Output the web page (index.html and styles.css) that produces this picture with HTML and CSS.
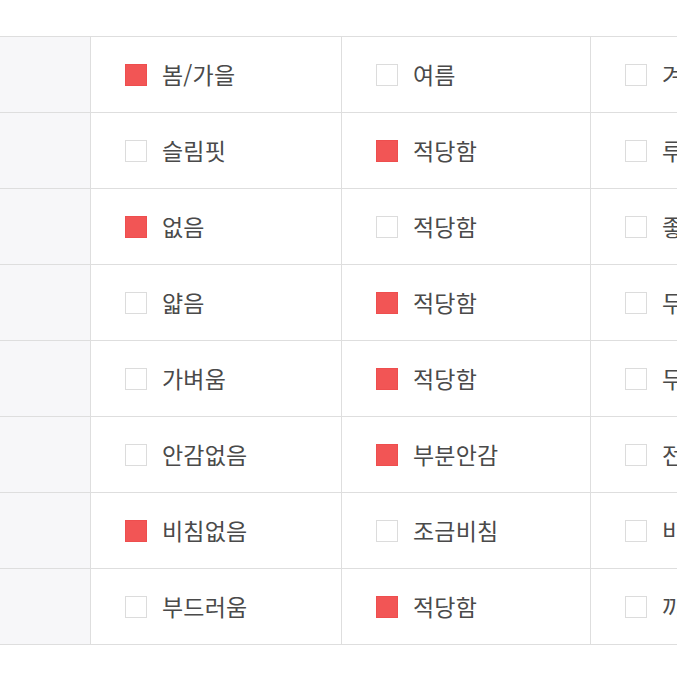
FILE: index.html
```html
<!DOCTYPE html>
<html lang="ko">
<head>
<meta charset="utf-8">
<link rel="stylesheet" href="styles.css">
</head>
<body>
<div class="wrap">
  <div class="table">
    <div class="row">
      <div class="label"></div>
      <div class="cell"><span class="box on"></span><span class="txt">봄/가을</span></div>
      <div class="cell"><span class="box"></span><span class="txt">여름</span></div>
      <div class="cell"><span class="box"></span><span class="txt">겨울</span></div>
    </div>
    <div class="row">
      <div class="label"></div>
      <div class="cell"><span class="box"></span><span class="txt">슬림핏</span></div>
      <div class="cell"><span class="box on"></span><span class="txt">적당함</span></div>
      <div class="cell"><span class="box"></span><span class="txt">루즈핏</span></div>
    </div>
    <div class="row">
      <div class="label"></div>
      <div class="cell"><span class="box on"></span><span class="txt">없음</span></div>
      <div class="cell"><span class="box"></span><span class="txt">적당함</span></div>
      <div class="cell"><span class="box"></span><span class="txt">좋음</span></div>
    </div>
    <div class="row">
      <div class="label"></div>
      <div class="cell"><span class="box"></span><span class="txt">얇음</span></div>
      <div class="cell"><span class="box on"></span><span class="txt">적당함</span></div>
      <div class="cell"><span class="box"></span><span class="txt">두꺼움</span></div>
    </div>
    <div class="row">
      <div class="label"></div>
      <div class="cell"><span class="box"></span><span class="txt">가벼움</span></div>
      <div class="cell"><span class="box on"></span><span class="txt">적당함</span></div>
      <div class="cell"><span class="box"></span><span class="txt">무거움</span></div>
    </div>
    <div class="row">
      <div class="label"></div>
      <div class="cell"><span class="box"></span><span class="txt">안감없음</span></div>
      <div class="cell"><span class="box on"></span><span class="txt">부분안감</span></div>
      <div class="cell"><span class="box"></span><span class="txt">전체안감</span></div>
    </div>
    <div class="row">
      <div class="label"></div>
      <div class="cell"><span class="box on"></span><span class="txt">비침없음</span></div>
      <div class="cell"><span class="box"></span><span class="txt">조금비침</span></div>
      <div class="cell"><span class="box"></span><span class="txt">비침있음</span></div>
    </div>
    <div class="row">
      <div class="label"></div>
      <div class="cell"><span class="box"></span><span class="txt">부드러움</span></div>
      <div class="cell"><span class="box on"></span><span class="txt">적당함</span></div>
      <div class="cell"><span class="box"></span><span class="txt">까슬함</span></div>
    </div>
  </div>
</div>
</body>
</html>
```

FILE: styles.css
```css
html, body {
  margin: 0;
  padding: 0;
  background: #ffffff;
  overflow: hidden;
}
.wrap {
  width: 677px;
  height: 677px;
  overflow: hidden;
  padding-top: 36px;
  box-sizing: border-box;
}
.table {
  width: 843px;
  border-top: 1px solid #dedede;
  font-family: "Noto Sans CJK KR", "Noto Sans", sans-serif;
  color: #4a4a4a;
}
.row {
  display: grid;
  grid-template-columns: 91px 251px 249px 252px;
  height: 76px;
  border-bottom: 1px solid #dedede;
  box-sizing: border-box;
}
.label {
  background: #f7f7f9;
  border-right: 1px solid #dedede;
}
.cell {
  display: flex;
  align-items: center;
  padding-left: 34px;
  border-right: 1px solid #dedede;
  gap: 15px;
}
.box {
  width: 20px;
  height: 20px;
  border: 1px solid #dcdcdc;
  background: #fff;
  flex: none;
}
.box.on {
  background: #f25555;
  border-color: #ee4e4e;
}
.txt {
  font-size: 23px;
  line-height: 1;
  letter-spacing: 0.2px;
}
```
